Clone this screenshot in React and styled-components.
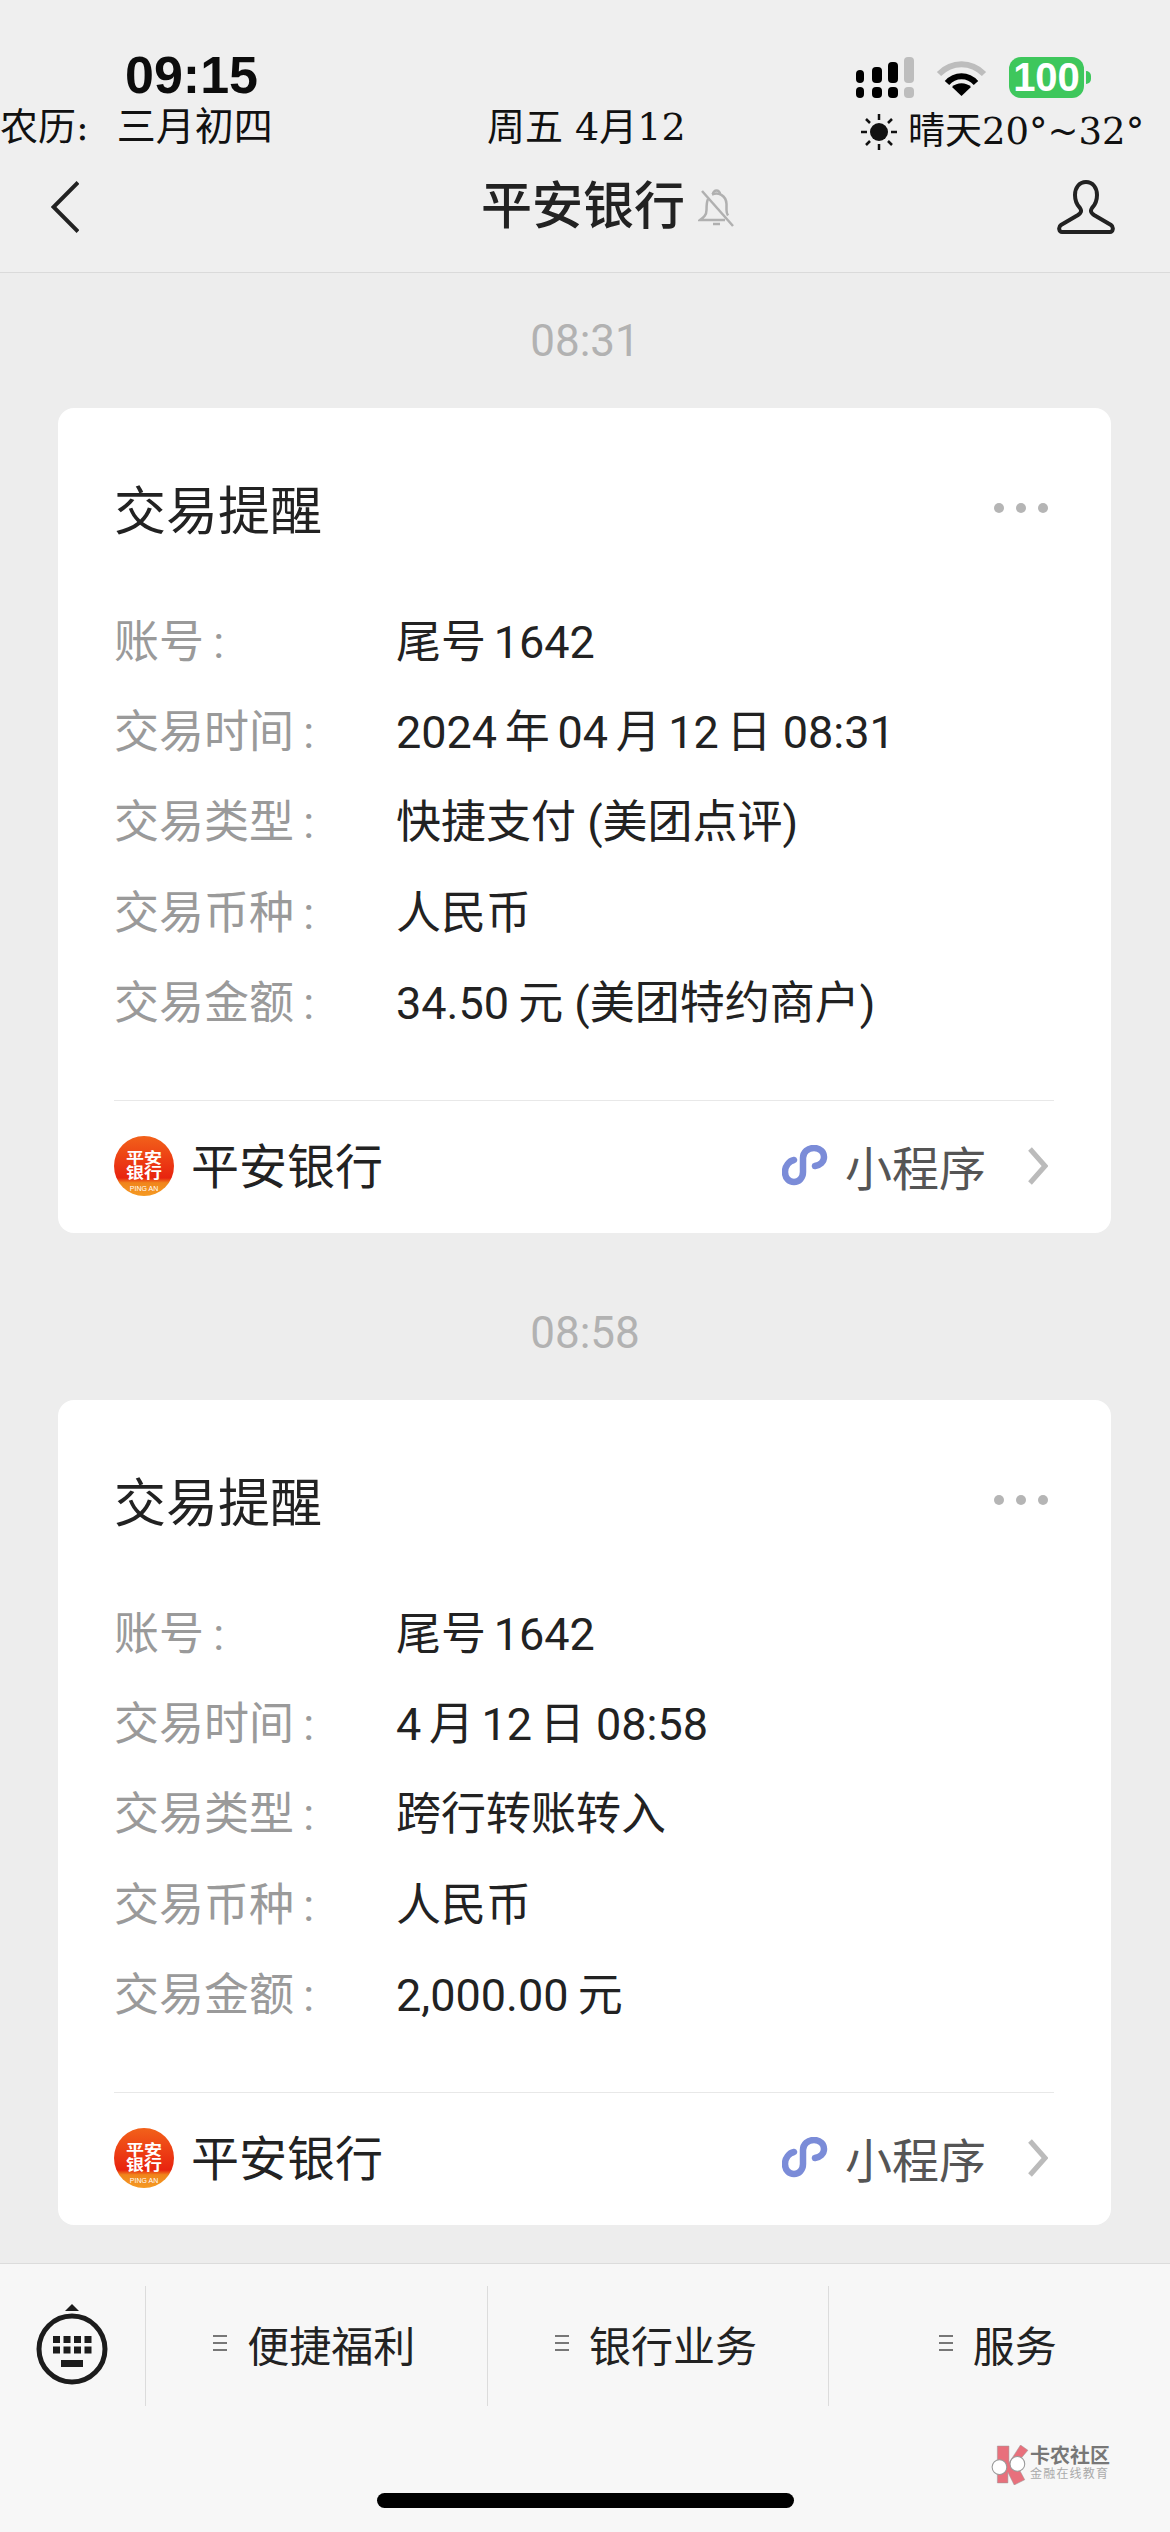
import styled, { createGlobalStyle } from 'styled-components'

const GlobalStyle = createGlobalStyle`
  html, body {
    margin: 0;
    padding: 0;
    background: #ededed;
  }
`

const UI_FONT = `Roboto, "Noto Sans CJK SC", sans-serif`
const DECO_FONT = `"DejaVu Serif", "Noto Sans CJK SC", serif`

const Page = styled.div`
  width: 1170px;
  height: 2532px;
  overflow: hidden;
  display: flex;
  flex-direction: column;
  background: #ededed;
  font-family: ${UI_FONT};
  color: #222;
`

const Header = styled.header`
  height: 272px;
  flex: none;
  background: #efefef;
  border-bottom: 1px solid #dadada;
  display: flex;
  flex-direction: column;
`

const StatusBar = styled.div`
  height: 152px;
  display: grid;
  grid-template-columns: 487px 369px 1fr;
`

const StatusLeft = styled.div`
  padding-top: 50px;
  display: flex;
  flex-direction: column;
`

const Clock = styled.div`
  height: 50px;
  padding-left: 125px;
  font: 700 52px/50px "Liberation Sans", sans-serif;
  color: #0c0c0c;
`

const DecoText = styled.div`
  font-family: ${DECO_FONT};
  font-size: ${(p) => p.$size || 38}px;
  line-height: 46px;
  color: #111;
  white-space: nowrap;
`

const Lunar = styled(DecoText)`
  margin-top: 4px;
  display: flex;
  span:last-child {
    margin-left: 28px;
    font-size: 39px;
  }
`

const StatusDate = styled(DecoText)`
  padding-top: 104px;
`

const StatusRight = styled.div`
  padding-top: 57px;
  display: flex;
  flex-direction: column;
`

const StatusIcons = styled.div`
  display: flex;
  align-items: center;
  height: 41px;
  svg {
    display: block;
  }
`

const Wifi = styled.svg`
  margin-left: 22px;
`

const Battery = styled.div`
  margin-left: 22px;
  width: 75px;
  height: 41px;
  border-radius: 12px;
  background: #3ec75c;
  color: #fff;
  font: 700 40px/41px "Liberation Sans", sans-serif;
  text-align: center;
  position: relative;
  &::after {
    content: '';
    position: absolute;
    right: -7px;
    top: 14px;
    width: 5px;
    height: 13px;
    border-radius: 0 6px 6px 0;
    background: #3ec75c;
  }
`

const Weather = styled(DecoText)`
  margin-top: 11px;
  margin-left: 4px;
  display: flex;
  align-items: center;
  gap: 10px;
  font-size: 37px;
`

const NavRow = styled.div`
  flex: 1;
  display: grid;
  grid-template-columns: 1fr auto 1fr;
  align-items: center;
  padding: 0 55px 0 51px;
  margin-top: -10px;
`

const Title = styled.div`
  font-size: 51px;
  font-weight: 500;
  line-height: 60px;
  color: #222;
`

const NavRight = styled.div`
  display: flex;
  align-items: center;
  justify-content: space-between;
  padding-left: 13px;
`

const Feed = styled.main`
  flex: 1;
  display: flex;
  flex-direction: column;
  gap: 32px;
`

const TimeLabel = styled.div`
  height: 135px;
  display: flex;
  align-items: center;
  justify-content: center;
  font-size: 44px;
  color: #b2b2b2;
`

const Card = styled.section`
  margin: 0 59px 0 58px;
  height: 825px;
  box-sizing: border-box;
  padding: 0 57px 0 56px;
  background: #fff;
  border-radius: 16px;
`

const CardHead = styled.div`
  height: 185px;
  box-sizing: border-box;
  padding-top: 24px;
  display: flex;
  align-items: center;
  justify-content: space-between;
`

const CardTitle = styled.div`
  font-size: 52px;
  line-height: 60px;
  color: #222;
`

const Dots = styled.div`
  display: flex;
  gap: 12px;
  margin: -10px 6px 0 0;
  i {
    width: 10px;
    height: 10px;
    border-radius: 50%;
    background: #b5b5b5;
  }
`

const Row = styled.div`
  height: 90.3px;
  display: grid;
  grid-template-columns: 282px 1fr;
  align-items: center;
  font-size: 45px;
  white-space: nowrap;
`

const Label = styled.div`
  color: #9a9a9a;
`

const Value = styled.div`
  color: #222;
`

const CardFoot = styled.div`
  margin-top: 56px;
  height: 132px;
  box-sizing: border-box;
  padding-bottom: 2px;
  border-top: 1px solid #e8e8e8;
  display: flex;
  align-items: center;
`

const FootName = styled.div`
  margin: -6px 0 0 17px;
  font-size: 48px;
  color: #222;
`

const FootLink = styled.div`
  margin-left: auto;
  display: flex;
  align-items: center;
  font-size: 47px;
  color: #555;
  span {
    margin: 0 42px 0 17px;
  }
  svg:last-child {
    margin-right: 6px;
  }
`

const BottomBar = styled.footer`
  height: 269px;
  flex: none;
  box-sizing: border-box;
  padding-top: 22px;
  background: #f7f7f7;
  border-top: 1px solid #dcdcdc;
  position: relative;
`

const Menu = styled.div`
  height: 120px;
  display: grid;
  grid-template-columns: 145px repeat(3, 1fr);
`

const KeyboardCell = styled.div`
  display: flex;
  align-items: center;
  padding: 6px 0 0 36px;
`

const MenuCell = styled.div`
  border-left: 1px solid #dcdcdc;
  display: flex;
  align-items: center;
  justify-content: center;
  gap: 20px;
  font-size: 42px;
  color: #222;
  padding: 0 4px 6px 0;
`

const MenuLines = styled.div`
  width: 14px;
  height: 16px;
  display: flex;
  flex-direction: column;
  justify-content: space-between;
  i {
    height: 2px;
    background: #777;
  }
`

const HomeBar = styled.div`
  width: 417px;
  height: 15px;
  margin: 87px auto 0;
  border-radius: 8px;
  background: #000;
`

const Watermark = styled.div`
  position: absolute;
  left: 991px;
  top: 181px;
  display: flex;
  gap: 1px;
`

const WatermarkText = styled.div`
  display: flex;
  flex-direction: column;
  b {
    font-size: 20px;
    line-height: 22px;
    font-weight: 700;
    color: #777;
  }
  small {
    font-size: 12px;
    line-height: 14px;
    letter-spacing: 1.2px;
    color: #aaa;
    white-space: nowrap;
  }
`

const Signal = () => (
  <svg width="58" height="41" viewBox="0 0 58 41">
    <rect x="0" y="13" width="8" height="13" rx="4" fill="#000" />
    <rect x="16" y="10" width="10" height="16" rx="4" fill="#000" />
    <rect x="32" y="5" width="10" height="21" rx="4" fill="#000" />
    <rect x="48" y="0" width="10" height="26" rx="4" fill="#bdbdbd" />
    <rect x="0" y="30" width="8" height="11" rx="4" fill="#000" />
    <rect x="16" y="30" width="10" height="11" rx="4" fill="#000" />
    <rect x="32" y="30" width="10" height="11" rx="4" fill="#000" />
    <rect x="48" y="30" width="10" height="11" rx="4" fill="#bdbdbd" />
  </svg>
)

const WifiIcon = () => (
  <Wifi width="51" height="38" viewBox="0 0 51 38">
    <path d="M3 15 C16 2 35 2 48 15" fill="none" stroke="#bdbdbd" strokeWidth="6" />
    <path d="M11 24 C19 15 32 15 40 24" fill="none" stroke="#000" strokeWidth="6" />
    <path d="M25.500 37 L16 28 C21 23 30 23 35 28 Z" fill="#000" />
  </Wifi>
)

const Sun = () => (
  <svg width="38" height="38" viewBox="0 0 38 38">
    <circle cx="19" cy="19" r="9" fill="#111" />
    <path
      d="M19 1v6M19 31v6M1 19h6M31 19h6M6 6l4 4M28 28l4 4M6 32l4-4M28 10l4-4"
      stroke="#111"
      strokeWidth="2.500"
    />
  </svg>
)

const BackIcon = () => (
  <svg width="28" height="52" viewBox="0 0 28 52">
    <path d="M27 1.500 L2.500 26 L27 50.500" fill="none" stroke="#222" strokeWidth="4" />
  </svg>
)

const BellOff = () => (
  <svg width="37" height="39" viewBox="0 0 37 39" fill="none" stroke="#b0b0b0" strokeWidth="2.500">
    <path d="M15 6 a3.500 3.500 0 0 1 7 0" />
    <path d="M10 11 C8.500 14 8.500 18 8.500 22 C8.500 27 6 29 2 32 L27 32" />
    <path d="M14 6.500 C20 4 28 7 28.500 16 L28.500 22 C28.500 24 29 26 30 27.500" />
    <path d="M15 36 h7" />
    <path d="M4 3 L35 38" />
  </svg>
)

const PersonIcon = () => (
  <svg width="58" height="54" viewBox="0 0 58 54">
    <path
      d="M29 2 C22 2 18 8 18 15 C18 21 20 25 23 28 C25 31 24 33 21 35 L4 45 C1 47 2 52 5 52 L53 52 C56 52 57 47 54 45 L37 35 C34 33 33 31 35 28 C38 25 40 21 40 15 C40 8 36 2 29 2Z"
      fill="none"
      stroke="#222"
      strokeWidth="4"
    />
  </svg>
)

const BankLogo = ({ id }) => (
  <svg width="60" height="60" viewBox="0 0 60 60" style={{ flex: 'none' }}>
    <defs>
      <linearGradient id={id} x1="0" y1="0" x2="0" y2="1">
        <stop offset="0" stopColor="#f2611a" />
        <stop offset="0.7" stopColor="#e8230f" />
        <stop offset="0.78" stopColor="#f0851c" />
        <stop offset="1" stopColor="#f59a22" />
      </linearGradient>
    </defs>
    <circle cx="30" cy="30" r="30" fill={`url(#${id})`} />
    <text x="12" y="27" textLength="36" lengthAdjust="spacingAndGlyphs" fontSize="15" fontWeight="700" fill="#fff" fontFamily="Noto Sans CJK SC">
      平安
    </text>
    <text x="12" y="42" textLength="36" lengthAdjust="spacingAndGlyphs" fontSize="15" fontWeight="700" fill="#fff" fontFamily="Noto Sans CJK SC">
      银行
    </text>
    <text x="30" y="55" textAnchor="middle" fontSize="7" fill="#fff" fontFamily="Liberation Sans">
      PING AN
    </text>
  </svg>
)

const LinkIcon = () => (
  <svg width="46" height="41" viewBox="0 0 46 41">
    <path
      d="M12 15 C7 16 3 21 3 27 C3 33 7 37 12 37 C17 37 21 33 21 27 L21 13 C21 7 26 3 32 3 C38 3 42 7 42 12 C42 17 38 20 33 21"
      fill="none"
      stroke="#7b8cd8"
      strokeWidth="6.500"
      strokeLinecap="round"
    />
  </svg>
)

const Chevron = () => (
  <svg width="20" height="38" viewBox="0 0 20 38">
    <path d="M2 2 L17 19 L2 36" fill="none" stroke="#bbb" strokeWidth="5" />
  </svg>
)

const KeyboardIcon = () => (
  <svg width="72" height="72" viewBox="0 0 72 72" style={{ overflow: 'visible' }}>
    <path d="M29 -2 L36 -9 L43 -2 Z" fill="#1c1c1c" />
    <circle cx="36" cy="36" r="33" fill="none" stroke="#1c1c1c" strokeWidth="5" />
    {[0, 1].map((r) =>
      [0, 1, 2, 3].map((c) => (
        <rect key={`${r}-${c}`} x={17 + c * 10.500} y={23 + r * 10.500} width="7" height="7" fill="#1c1c1c" />
      ))
    )}
    <rect x="25" y="47" width="22" height="7" fill="#1c1c1c" />
  </svg>
)

const KanongLogo = () => (
  <svg width="38" height="40" viewBox="0 0 36 38">
    <path d="M6 1 H17 V17 L28 0 L35 5 L24 18 L32 33 L22 38 L16 26 V36 H6 Z" fill="#e8707c" stroke="#999" strokeWidth="0.500" />
    <circle cx="8" cy="21" r="7" fill="#fff" stroke="#999" strokeWidth="1" />
    <circle cx="25" cy="18" r="7" fill="#fff" stroke="#999" strokeWidth="1" />
  </svg>
)

const messages = [
  {
    time: '08:31',
    rows: [
      ['账号\u2009:', '尾号\u20061642'],
      ['交易时间\u2009:', '2024\u2006年\u200604\u2006月\u200612\u2006日 08:31'],
      ['交易类型\u2009:', '快捷支付 (美团点评)'],
      ['交易币种\u2009:', '人民币'],
      ['交易金额\u2009:', '34.50\u2009元 (美团特约商户)'],
    ],
  },
  {
    time: '08:58',
    rows: [
      ['账号\u2009:', '尾号\u20061642'],
      ['交易时间\u2009:', '4\u2006月\u200612\u2006日 08:58'],
      ['交易类型\u2009:', '跨行转账转入'],
      ['交易币种\u2009:', '人民币'],
      ['交易金额\u2009:', '2,000.00\u2009元'],
    ],
  },
]

const menuItems = ['便捷福利', '银行业务', '服务']

const App = () => {
  return (
    <>
      <GlobalStyle />
      <Page>
        <Header>
          <StatusBar>
            <StatusLeft>
              <Clock>09:15</Clock>
              <Lunar>
                <span>农历:</span>
                <span>三月初四</span>
              </Lunar>
            </StatusLeft>
            <StatusDate>周五 4月12</StatusDate>
            <StatusRight>
              <StatusIcons>
                <Signal />
                <WifiIcon />
                <Battery>100</Battery>
              </StatusIcons>
              <Weather>
                <Sun />
                <span>晴天20°~32°</span>
              </Weather>
            </StatusRight>
          </StatusBar>
          <NavRow>
            <BackIcon />
            <Title>平安银行</Title>
            <NavRight>
              <BellOff />
              <PersonIcon />
            </NavRight>
          </NavRow>
        </Header>

        <Feed>
          {messages.map((msg, i) => (
            <div key={msg.time}>
              <TimeLabel>{msg.time}</TimeLabel>
              <Card>
                <CardHead>
                  <CardTitle>交易提醒</CardTitle>
                  <Dots>
                    <i />
                    <i />
                    <i />
                  </Dots>
                </CardHead>
                {msg.rows.map(([label, value]) => (
                  <Row key={label}>
                    <Label>{label}</Label>
                    <Value>{value}</Value>
                  </Row>
                ))}
                <CardFoot>
                  <BankLogo id={`bank-logo-${i}`} />
                  <FootName>平安银行</FootName>
                  <FootLink>
                    <LinkIcon />
                    <span>小程序</span>
                    <Chevron />
                  </FootLink>
                </CardFoot>
              </Card>
            </div>
          ))}
        </Feed>

        <BottomBar>
          <Menu>
            <KeyboardCell>
              <KeyboardIcon />
            </KeyboardCell>
            {menuItems.map((item) => (
              <MenuCell key={item}>
                <MenuLines>
                  <i />
                  <i />
                  <i />
                </MenuLines>
                {item}
              </MenuCell>
            ))}
          </Menu>
          <HomeBar />
          <Watermark>
            <KanongLogo />
            <WatermarkText>
              <b>卡农社区</b>
              <small>金融在线教育</small>
            </WatermarkText>
          </Watermark>
        </BottomBar>
      </Page>
    </>
  )
}

export default App
